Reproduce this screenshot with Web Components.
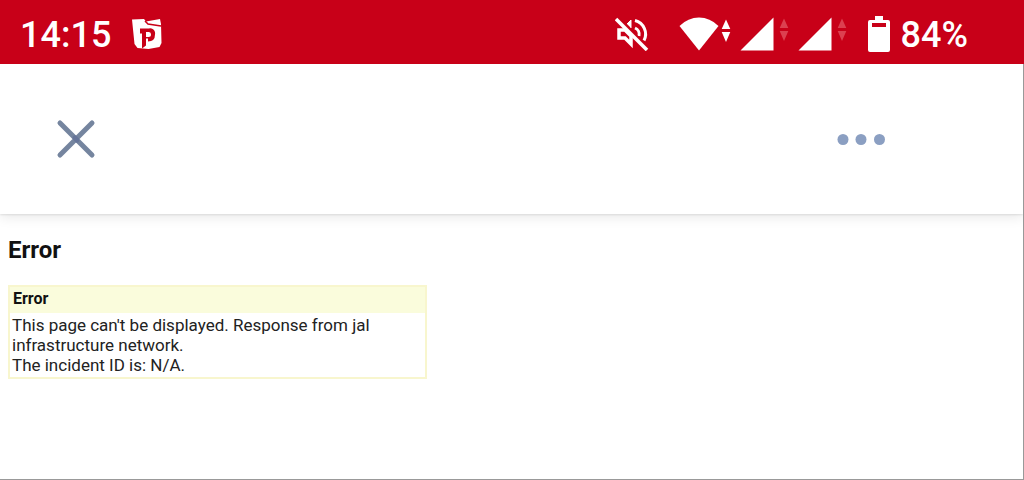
<!DOCTYPE html>
<html lang="en">
<head>
<meta charset="utf-8">
<meta name="viewport" content="width=device-width, initial-scale=1">
<title>Error</title>
<style>
html { height: 100%; }
body { margin: 0; min-height: 100%; display: flex; font-family: Roboto, "Liberation Sans", sans-serif; color: #222; background: #fff; }
</style>
</head>
<body>
<app-screen></app-screen>
<script>
const define = (name, html) => {
  const template = document.createElement("template");
  template.innerHTML = html;
  customElements.define(name, class extends HTMLElement {
    constructor() {
      super();
      this.attachShadow({ mode: "open" }).append(template.content.cloneNode(true));
    }
  });
};

define("data-arrows", `
<style>
:host { display: block; color: #fff; }
:host([idle]) { color: #dc4050; }
svg { display: block; }
</style>
<svg width="10" height="24" viewBox="0 0 10 24" fill="currentColor" aria-hidden="true"><path d="M5 0.5 9.3 10H.7zM.7 13h8.6L5 23z"/></svg>`);

define("signal-strength", `
<style>
:host { display: flex; gap: 5px; align-items: flex-start; }
svg { display: block; }
data-arrows { margin-top: 1px; }
</style>
<svg width="34" height="34" viewBox="0 0 34 34" fill="#fff" role="img" aria-label="Mobile signal"><path d="M33.5 .5V33.5H.5z"/></svg>
<data-arrows idle></data-arrows>`);

define("status-bar", `
<style>
:host { display: flex; box-sizing: border-box; height: 64px; padding: 4px 56px 0 20px; align-items: center; background: #c80018; color: #fff; font-size: 36px; line-height: 42px; font-weight: 500; }
time, .level { padding-top: 2px; }
svg { display: block; flex: none; }
.app { margin-left: 20px; }
.mute { margin-left: auto; }
.wifi { display: flex; gap: 2px; margin-left: 30px; align-items: flex-start; }
.wifi data-arrows { margin-top: 2px; }
signal-strength { margin-left: 9px; }
.battery { margin: 0 11px 0 21px; }
</style>
<time>14:15</time>
<svg class="app" width="32" height="32" viewBox="0 0 32 32" fill="none" role="img" aria-label="App notification">
<path d="M1 1.500 13 1l2 2.500L29 1l1 5 .500 19-2 4-11 2-11-1-3-4z" fill="#fff"/>
<path d="M14 3l3 3 13 2" stroke="#c80018" stroke-width="1.500"/>
<path d="M9 10.500h9a5 5 0 0 1 6 6q0 7-7 7v-3h-2v7l-4 3v-15H9z" fill="#c80018"/>
<path d="M15 14h3q2 0 2 2.500T17.500 19H15z" fill="#fff"/>
</svg>
<svg class="mute" width="34" height="34" viewBox="0 0 34 34" fill="none" stroke="#fff" role="img" aria-label="Sound off">
<path d="M10 13H4v8h6l6 6V19z" stroke-width="3.500"/>
<path d="M12 7l4-4v8" fill="#fff" stroke-width="1"/>
<path d="M20 3.500a14 14 0 0 1 9 20M20 11a7 7 0 0 1 4 8" stroke-width="3"/>
<path d="M3 1l30 30" stroke="#c80018" stroke-width="3"/>
<path d="M1 2l31 31" stroke-width="3.500"/>
</svg>
<div class="wifi">
<svg width="40" height="34" viewBox="0 0 40 34" fill="#fff" role="img" aria-label="Wi-Fi"><path d="M.5 9Q9 .5 20 .5T39.500 9L20 33.500z"/></svg>
<data-arrows></data-arrows>
</div>
<signal-strength></signal-strength>
<signal-strength></signal-strength>
<svg class="battery" width="22" height="36" viewBox="0 0 22 36" aria-hidden="true"><path d="M7 0h8v4h5q2 0 2 2v28q0 2-2 2H2q-2 0-2-2V6q0-2 2-2h5z" fill="#fff"/><path d="M4 7h14v4H4z" fill="#c80018"/></svg>
<span class="level">84%</span>`);

define("browser-toolbar", `
<style>
:host { display: flex; box-sizing: border-box; height: 150px; padding: 0 136px 0 55px; align-items: center; justify-content: space-between; background: #fff; box-shadow: 0 1px 2px #00000018, 0 3px 12px #00000018; clip-path: inset(0 0 -20px 0); }
button { display: block; border: 0; padding: 0; background: none; cursor: pointer; }
svg { display: block; }
</style>
<button type="button" aria-label="Close"><svg width="42" height="42" viewBox="0 0 42 42" fill="none" stroke="#75859f" stroke-width="5" stroke-linecap="round"><path d="M5 5l32 32M37 5L5 37"/><path d="M20 20l2 2" stroke="#657499"/></svg></button>
<button type="button" aria-label="More options"><svg width="50" height="12" viewBox="0 0 50 12" fill="#8b9fc2"><circle cx="6" cy="6.500" r="5.500"/><circle cx="24" cy="6.500" r="5.500"/><circle cx="42.500" cy="6.500" r="5.500"/></svg></button>`);

define("error-notice", `
<style>
:host { display: block; max-width: 419px; }
table { width: 100%; box-sizing: border-box; border-collapse: separate; border-spacing: 0; border: 2px solid #f8f6ce; line-height: 20px; }
th, td { text-align: left; }
th { padding: 2px 3px 4px; background: #fafcdc; color: #111; font-size: 16px; font-weight: 700; }
td { padding: 2px; font-size: 17px; }
</style>
<table>
<thead><tr><th scope="col"><slot name="title"></slot></th></tr></thead>
<tbody><tr><td><slot></slot></td></tr></tbody>
</table>`);

define("app-screen", `
<style>
:host { display: flex; flex: 1; flex-direction: column; min-width: 0; }
.view { flex: 1; display: flex; flex-direction: column; border: solid #999; border-width: 0 1px 1px 0; }
main { padding: 22px 8px; }
h1 { margin: 0 0 21px; font-size: 24px; line-height: 28px; color: #111; }
</style>
<status-bar></status-bar>
<div class="view">
<browser-toolbar></browser-toolbar>
<main>
<h1>Error</h1>
<error-notice><span slot="title">Error</span>This page can't be displayed. Response from jal infrastructure network.<br>The incident ID is: N/A.</error-notice>
</main>
</div>`);
</script>
</body>
</html>
